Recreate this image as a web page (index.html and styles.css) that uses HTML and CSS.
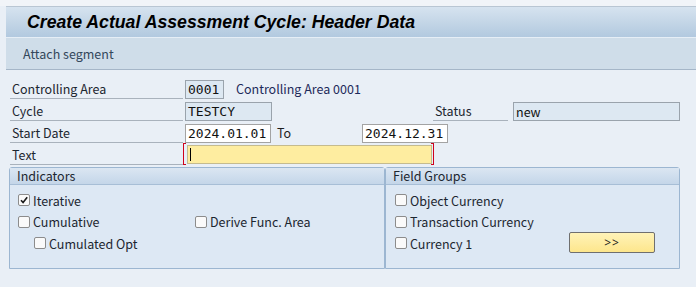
FILE: index.html
```html
<!DOCTYPE html>
<html>
<head>
<meta charset="utf-8">
<link rel="stylesheet" href="styles.css">
</head>
<body>
<div class="top-band"></div>
<header class="titlebar"><h1>Create Actual Assessment Cycle: Header Data</h1></header>
<nav class="toolbar"><span class="tool">Attach segment</span></nav>
<main class="form">
  <div class="row">
    <span class="label">Controlling Area</span>
    <span class="field ro w-area">0001</span>
    <span class="desc">Controlling Area 0001</span>
  </div>
  <div class="row">
    <span class="label">Cycle</span>
    <span class="field ro w-cycle">TESTCY</span>
    <span class="label status-label">Status</span>
    <span class="field ro w-status prop">new</span>
  </div>
  <div class="row">
    <span class="label">Start Date</span>
    <span class="field edit w-date">2024.01.01</span>
    <span class="to">To</span>
    <span class="field edit w-date">2024.12.31</span>
  </div>
  <div class="row">
    <span class="label">Text</span>
    <span class="text-wrap"><span class="field req w-text"><span class="caret"></span></span></span>
  </div>
  <div class="groups">
    <section class="group g-ind">
      <div class="group-head">Indicators</div>
      <div class="group-body ind-body">
        <label class="cb"><span class="box"><svg viewBox="0 0 10 10" width="10" height="10"><path d="M2 5.2 L4.1 7.6 L8.2 2.2" fill="none" stroke="#1a1a1a" stroke-width="1.6"/></svg></span>Iterative</label>
        <span></span>
        <label class="cb"><span class="box"></span>Cumulative</label>
        <label class="cb"><span class="box"></span>Derive Func. Area</label>
        <label class="cb indent"><span class="box"></span>Cumulated Opt</label>
      </div>
    </section>
    <section class="group g-fg">
      <div class="group-head">Field Groups</div>
      <div class="group-body fg-body">
        <label class="cb"><span class="box"></span>Object Currency</label>
        <span></span>
        <label class="cb"><span class="box"></span>Transaction Currency</label>
        <span></span>
        <label class="cb"><span class="box"></span>Currency 1</label>
        <button class="more">&gt;&gt;</button>
      </div>
    </section>
  </div>
</main>
</body>
</html>
```
FILE: styles.css
```css
html, body { margin: 0; padding: 0; }
body {
  width: 696px; height: 287px; overflow: hidden;
  background: #e9eff6;
  font-family: "Noto Sans CJK KR", "Noto Sans", sans-serif;
  font-size: 12.5px; color: #1c1c1c;
}
.top-band { height: 6px; background: #f1f4f8; }
.titlebar {
  margin-left: 6px;
  background: linear-gradient(#d6e3ef, #b2c9df);
  border-top: 1px solid #b9c6d3;
  box-sizing: border-box; height: 31px;
  display: flex; align-items: center;
}
.titlebar h1 {
  margin: 0 0 0 21px;
  font-family: "Liberation Sans", Arial, sans-serif;
  font-weight: bold; font-style: italic; font-size: 17.7px;
  color: #000;
}
.toolbar {
  margin-left: 6px; height: 33px; box-sizing: border-box;
  background: #cfdde9;
  border-top: 1px solid #e6eef6;
  border-bottom: 1px solid #a5b6c8;
  display: flex; align-items: center;
}
.tool { margin-left: 17px; color: #33475b; }
.form { padding: 7px 0 0 10px; }
.row { display: flex; align-items: flex-end; height: 22px; }
.label {
  width: 173px; height: 19px; box-sizing: border-box;
  padding-left: 2px; line-height: 18px;
  border-bottom: 1px solid #a9b2bc; color: #1c2630;
}
.field {
  margin-left: 2px; height: 19px; box-sizing: border-box;
  border: 1px solid #9aa3ac;
  font-family: "DejaVu Sans Mono", "Liberation Mono", monospace;
  font-size: 13px; line-height: 17px; padding-left: 2px;
  color: #111;
}
.ro { background: #dde8f2; }
.edit { background: #fff; border-color: #a3a3a3; }
.prop { font-family: "Noto Sans CJK KR", "Noto Sans", sans-serif; font-size: 12.5px; }
.w-area { width: 39px; }
.w-cycle { width: 87px; }
.w-date { width: 86px; }
.w-status { width: 167px; margin-left: 5px; }
.desc { margin-left: 12px; line-height: 18px; height: 19px; color: #1e2a5a; }
.status-label { width: 75px; margin-left: 161px; }
.to { margin-left: 6px; width: 83px; line-height: 18px; height: 19px; }
.text-wrap {
  background:
    linear-gradient(#d0021b,#d0021b) left top/3px 1px no-repeat,
    linear-gradient(#d0021b,#d0021b) left top/1px 100% no-repeat,
    linear-gradient(#d0021b,#d0021b) left bottom/3px 1px no-repeat,
    linear-gradient(#d0021b,#d0021b) right top/3px 1px no-repeat,
    linear-gradient(#d0021b,#d0021b) right top/1px 100% no-repeat,
    linear-gradient(#d0021b,#d0021b) right bottom/3px 1px no-repeat;
  height: 22px; box-sizing: border-box; padding: 2px 2px 1px 4px;
}
.req {
  display: block; margin-left: 0; width: 245px; height: 19px;
  background: #feeda0; border-color: #c5bb8e;
}
.caret { display: inline-block; width: 1px; height: 13px; background: #000; margin-top: 2px; }
.groups { display: flex; margin-top: 2px; margin-left: -1px; height: 102px; }
.group {
  border: 1px solid #9cb6d1; border-radius: 3px 3px 0 0;
  background: #dde8f4; box-sizing: border-box;
}
.g-ind { width: 376px; }
.g-fg { width: 295px; }
.group-head {
  height: 17px; box-sizing: border-box;
  background: linear-gradient(#dbe6f2, #c4d6e9);
  border-bottom: 1px solid #a7bed6;
  padding-left: 7px; line-height: 16px; color: #1c2630;
}
.group-body { display: grid; grid-auto-rows: 21.5px; padding-top: 8px; }
.ind-body { grid-template-columns: 177px 1fr; padding-left: 8px; }
.fg-body { grid-template-columns: 174px 1fr; padding-left: 9px; }
.cb { display: flex; align-items: center; height: 14px; color: #1c2630; }
.indent { padding-left: 16px; }
.box {
  width: 12px; height: 12px; box-sizing: border-box;
  border: 1px solid #8c8c8c; border-radius: 2px; background: #fafafa;
  margin-right: 3px; display: inline-flex; align-items: center; justify-content: center;
}
.more {
  width: 86px; height: 21px; margin-top: -4px;
  border: 1px solid #6f6f6f; border-radius: 2px;
  background: linear-gradient(#fff3b8, #fde68c);
  font-family: "Noto Sans", sans-serif; font-size: 12px; color: #1c1c1c; padding: 0;
  letter-spacing: 1px;
}
```
